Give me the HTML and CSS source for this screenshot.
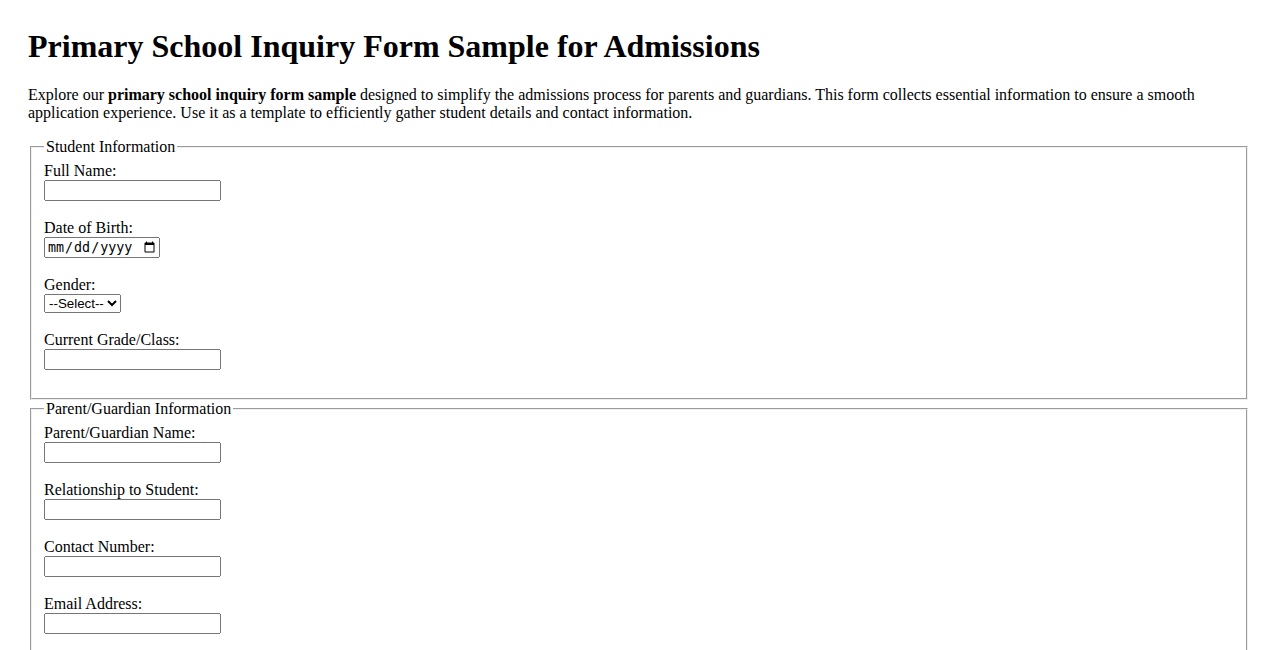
FILE: index.html
```html
<!DOCTYPE html>
<html lang="en">
<head>
    <meta charset="UTF-8">
    <meta name="viewport" content="width=device-width, initial-scale=1.0">
    <title>Primary School Inquiry Form Sample for Admissions</title>
    <link rel="stylesheet" href="styles.css">
</head>
<body>

    <h1>Primary School Inquiry Form Sample for Admissions</h1>
    <p>Explore our <strong>primary school inquiry form sample</strong> designed to simplify the admissions process for parents and guardians. This form collects essential information to ensure a smooth application experience. Use it as a template to efficiently gather student details and contact information.</p>

    <form>
        <fieldset>
            <legend>Student Information</legend>
            <label for="fullName">Full Name:</label>
            <input type="text" id="fullName" name="fullName">

            <label for="dob">Date of Birth:</label>
            <input type="date" id="dob" name="dob">

            <label for="gender">Gender:</label>
            <select id="gender" name="gender">
                <option value="">--Select--</option>
                <option value="male">Male</option>
                <option value="female">Female</option>
                <option value="other">Other</option>
            </select>

            <label for="grade">Current Grade/Class:</label>
            <input type="text" id="grade" name="grade">
        </fieldset>

        <fieldset>
            <legend>Parent/Guardian Information</legend>
            <label for="parentName">Parent/Guardian Name:</label>
            <input type="text" id="parentName" name="parentName">

            <label for="relationship">Relationship to Student:</label>
            <input type="text" id="relationship" name="relationship">

            <label for="phone">Contact Number:</label>
            <input type="tel" id="phone" name="phone">

            <label for="email">Email Address:</label>
            <input type="email" id="email" name="email">
        </fieldset>
    </form>

</body>
</html>
```

FILE: styles.css
```css
body {
    margin: 0;
    padding: 28px;
    font-family: "Liberation Serif", "Times New Roman", serif;
}
h1 {
    margin-top: 0;
}
fieldset {
    margin: 0 2px;
}
label {
    display: block;
}
input,
select {
    display: block;
    margin-bottom: 18px;
    box-sizing: border-box;
}
input {
    width: 177px;
    height: 21px;
}
input[type="date"] {
    width: 116px;
}
select {
    width: 77px;
}
```
